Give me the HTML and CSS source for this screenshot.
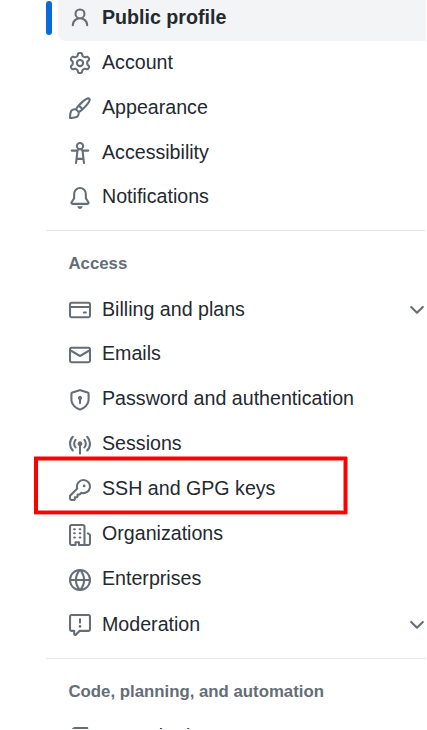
FILE: index.html
```html
<!DOCTYPE html>
<html lang="en">
<head>
<meta charset="utf-8">
<title>Settings</title>
<link rel="stylesheet" href="styles.css">
</head>
<body>
<nav class="sidebar">
  <ul class="group">
    <li class="item active"><svg class="icon" viewBox="0 0 16 16"><path d="M10.561 8.073a6.005 6.005 0 0 1 3.432 5.142.75.75 0 1 1-1.498.07 4.5 4.5 0 0 0-8.99 0 .75.75 0 0 1-1.498-.07 6.004 6.004 0 0 1 3.431-5.142 3.999 3.999 0 1 1 5.123 0ZM10.5 5a2.5 2.5 0 1 0-5 0 2.5 2.5 0 0 0 5 0Z"/></svg><span class="label">Public profile</span></li>
    <li class="item"><svg class="icon" viewBox="0 0 16 16"><path d="M8 0a8.2 8.2 0 0 1 .701.031C9.444.095 9.99.645 10.16 1.29l.288 1.107c.018.066.079.158.212.224.231.114.454.243.668.386.123.082.233.09.299.071l1.103-.303c.644-.176 1.392.021 1.82.63.27.385.506.792.704 1.218.315.675.111 1.422-.364 1.891l-.814.806c-.049.048-.098.147-.088.294.016.257.016.515 0 .772-.01.147.038.246.088.294l.814.806c.475.469.679 1.216.364 1.891a7.977 7.977 0 0 1-.704 1.217c-.428.61-1.176.807-1.82.63l-1.102-.302c-.067-.019-.177-.011-.3.071a5.909 5.909 0 0 1-.668.386c-.133.066-.194.158-.211.224l-.29 1.106c-.168.646-.715 1.196-1.458 1.26a8.006 8.006 0 0 1-1.402 0c-.743-.064-1.289-.614-1.458-1.26l-.289-1.106c-.018-.066-.079-.158-.212-.224a5.738 5.738 0 0 1-.668-.386c-.123-.082-.233-.09-.299-.071l-1.103.303c-.644.176-1.392-.021-1.82-.63a8.12 8.12 0 0 1-.704-1.218c-.315-.675-.111-1.422.363-1.891l.815-.806c.05-.048.098-.147.088-.294a6.214 6.214 0 0 1 0-.772c.01-.147-.038-.246-.088-.294l-.815-.806C.635 6.045.431 5.298.746 4.623a7.92 7.92 0 0 1 .704-1.217c.428-.61 1.176-.807 1.82-.63l1.102.302c.067.019.177.011.3-.071.214-.143.437-.272.668-.386.133-.066.194-.158.211-.224l.29-1.106C6.009.645 6.556.095 7.299.03 7.53.01 7.764 0 8 0Zm-.571 1.525c-.036.003-.108.036-.137.146l-.289 1.105c-.147.561-.549.967-.998 1.189-.173.086-.34.183-.5.29-.417.278-.97.423-1.529.27l-1.103-.303c-.109-.03-.175.016-.195.045-.22.312-.412.644-.573.99-.014.031-.021.11.059.19l.815.806c.411.406.562.957.53 1.456a4.709 4.709 0 0 0 0 .582c.032.499-.119 1.05-.53 1.456l-.815.806c-.081.08-.073.159-.059.19.162.346.353.677.573.989.02.03.085.076.195.046l1.102-.303c.56-.153 1.113-.008 1.53.27.161.107.328.204.501.29.447.222.85.629.997 1.189l.289 1.105c.029.109.101.143.137.146a6.6 6.6 0 0 0 1.142 0c.036-.003.108-.036.137-.146l.289-1.105c.147-.561.549-.967.998-1.189.173-.086.34-.183.5-.29.417-.278.97-.423 1.529-.27l1.103.303c.109.029.175-.016.195-.045.22-.313.411-.644.573-.99.014-.031.021-.11-.059-.19l-.815-.806c-.411-.406-.562-.957-.53-1.456a4.709 4.709 0 0 0 0-.582c-.032-.499.119-1.05.53-1.456l.815-.806c.081-.08.073-.159.059-.19a6.464 6.464 0 0 0-.573-.989c-.02-.03-.085-.076-.195-.046l-1.102.303c-.56.153-1.113.008-1.53-.27a4.44 4.44 0 0 0-.501-.29c-.447-.222-.85-.629-.997-1.189l-.289-1.105c-.029-.11-.101-.143-.137-.146a6.6 6.6 0 0 0-1.142 0ZM11 8a3 3 0 1 1-6 0 3 3 0 0 1 6 0ZM9.5 8a1.5 1.5 0 1 0-3.001.001A1.5 1.5 0 0 0 9.5 8Z"/></svg><span class="label">Account</span></li>
    <li class="item"><svg class="icon" viewBox="0 0 16 16"><path d="M11.134 1.535c.7-.509 1.416-.942 2.076-1.155.649-.21 1.463-.267 2.069.34.603.601.568 1.411.368 2.07-.202.668-.624 1.39-1.125 2.096-1.011 1.424-2.496 2.987-3.775 4.249-1.098 1.084-2.132 1.839-3.04 2.3a3.744 3.744 0 0 1-1.055 3.217c-.431.431-1.065.691-1.657.861-.614.177-1.294.287-1.914.357A21.151 21.151 0 0 1 .797 16H.743l.007-.75H.749L.742 16a.75.75 0 0 1-.743-.742l.743-.008-.742.007v-.054a21.25 21.25 0 0 1 .13-2.284c.067-.647.187-1.287.358-1.914.17-.591.43-1.226.86-1.657a3.746 3.746 0 0 1 3.227-1.054c.466-.893 1.225-1.907 2.314-2.982 1.271-1.255 2.833-2.75 4.245-3.777ZM1.62 13.089c-.051.464-.086.929-.104 1.395.466-.018.932-.053 1.396-.104a10.511 10.511 0 0 0 1.668-.309c.526-.151.856-.325 1.011-.48a2.25 2.25 0 1 0-3.182-3.182c-.155.155-.329.485-.48 1.01a10.515 10.515 0 0 0-.309 1.67Zm10.396-10.34c-1.224.89-2.605 2.189-3.822 3.384l1.718 1.718c1.21-1.205 2.51-2.597 3.387-3.833.47-.662.78-1.227.912-1.662.134-.444.032-.551.009-.575h-.001V1.78c-.014-.014-.113-.113-.548.027-.432.14-.995.462-1.655.942Zm-4.832 7.266-.001.001a9.859 9.859 0 0 0 1.63-1.142L7.155 7.216a9.7 9.7 0 0 0-1.161 1.607c.482.302.889.71 1.19 1.192Z"/></svg><span class="label">Appearance</span></li>
    <li class="item"><svg class="icon" viewBox="0 0 16 16"><path d="M9.923 5.302c.063.063.122.129.178.198H14A.75.75 0 0 1 14 7h-3.3l.578 5.163.362 2.997a.75.75 0 0 1-1.49.18L9.868 13H6.132l-.282 2.34a.75.75 0 0 1-1.49-.18l.362-2.997L5.3 7H2a.75.75 0 0 1 0-1.5h3.9a2.54 2.54 0 0 1 .176-.198 3 3 0 1 1 3.847 0ZM9.2 7.073h-.001a1.206 1.206 0 0 0-2.398 0L6.305 11.5h3.39ZM9.5 3a1.5 1.5 0 1 0-3.001.001A1.5 1.5 0 0 0 9.5 3Z"/></svg><span class="label">Accessibility</span></li>
    <li class="item raised"><svg class="icon" viewBox="0 0 16 16"><path d="M8 16a2 2 0 0 0 1.985-1.75c.017-.137-.097-.25-.235-.25h-3.5c-.138 0-.252.113-.235.25A2 2 0 0 0 8 16ZM3 5a5 5 0 0 1 10 0v2.947c0 .05.015.098.042.139l1.703 2.555A1.519 1.519 0 0 1 13.482 13H2.518a1.516 1.516 0 0 1-1.263-2.36l1.703-2.554A.255.255 0 0 0 3 7.947Zm5-3.5A3.5 3.5 0 0 0 4.5 5v2.947c0 .346-.102.683-.294.97l-1.703 2.556a.017.017 0 0 0-.003.01l.001.006.004.006.006.004.007.001h10.964l.007-.001.006-.004.004-.006.001-.007a.017.017 0 0 0-.003-.01l-1.703-2.554a1.745 1.745 0 0 1-.294-.97V5A3.5 3.5 0 0 0 8 1.5Z"/></svg><span class="label">Notifications</span></li>
  </ul>
  <section class="section">
    <h2 class="heading">Access</h2>
    <ul class="group">
      <li class="item"><svg class="icon" viewBox="0 0 16 16"><path d="M10.75 9a.75.75 0 0 0 0 1.5h1.5a.75.75 0 0 0 0-1.5h-1.5Z"/><path d="M0 3.75C0 2.784.784 2 1.75 2h12.5c.966 0 1.75.784 1.75 1.75v8.5A1.75 1.75 0 0 1 14.25 14H1.75A1.75 1.75 0 0 1 0 12.25ZM14.5 6.5h-13v5.75c0 .138.112.25.25.25h12.5a.25.25 0 0 0 .25-.25Zm0-2.75a.25.25 0 0 0-.25-.25H1.75a.25.25 0 0 0-.25.25V5h13Z"/></svg><span class="label">Billing and plans</span><svg class="chevron" viewBox="0 0 16 16"><path d="M12.78 5.22a.749.749 0 0 1 0 1.06l-4.25 4.25a.749.749 0 0 1-1.06 0L3.22 6.28a.749.749 0 1 1 1.06-1.06L8 8.939l3.72-3.719a.749.749 0 0 1 1.06 0Z"/></svg></li>
      <li class="item raised"><svg class="icon" viewBox="0 0 16 16"><path d="M1.75 2h12.5c.966 0 1.75.784 1.75 1.75v8.5A1.75 1.75 0 0 1 14.25 14H1.75A1.75 1.75 0 0 1 0 12.25v-8.5C0 2.784.784 2 1.75 2ZM1.5 12.251c0 .138.112.25.25.25h12.5a.25.25 0 0 0 .25-.25V5.809L8.38 9.397a.75.75 0 0 1-.76 0L1.5 5.809v6.442Zm13-8.181v-.32a.25.25 0 0 0-.25-.25H1.75a.25.25 0 0 0-.25.25v.32L8 7.88Z"/></svg><span class="label">Emails</span></li>
      <li class="item raised"><svg class="icon" viewBox="0 0 16 16"><path d="m8.533.133 5.25 1.68A1.75 1.75 0 0 1 15 3.48V7c0 1.566-.32 3.182-1.303 4.682-.983 1.498-2.585 2.813-5.032 3.855a1.697 1.697 0 0 1-1.33 0c-2.447-1.042-4.049-2.357-5.032-3.855C1.32 10.182 1 8.566 1 7V3.48a1.75 1.75 0 0 1 1.217-1.667l5.25-1.68a1.748 1.748 0 0 1 1.066 0Zm-.61 1.429.001.001-5.25 1.68a.251.251 0 0 0-.174.237V7c0 1.36.275 2.666 1.057 3.859.784 1.194 2.121 2.342 4.366 3.298a.196.196 0 0 0 .154 0c2.245-.957 3.582-2.103 4.366-3.297C13.225 9.666 13.5 8.358 13.5 7V3.48a.25.25 0 0 0-.174-.238l-5.25-1.68a.25.25 0 0 0-.153 0ZM9.5 6.5c0 .536-.286 1.032-.75 1.3v2.45a.75.75 0 0 1-1.5 0V7.8A1.5 1.5 0 1 1 9.5 6.5Z"/></svg><span class="label">Password and authentication</span></li>
      <li class="item raised"><svg class="icon" viewBox="0 0 16 16"><path d="M8.75 8.582v5.668a.75.75 0 0 1-1.5 0V8.582a1.75 1.75 0 1 1 1.5 0Zm3.983-7.125a.75.75 0 0 1 1.06.026A7.976 7.976 0 0 1 16 7c0 2.139-.84 4.083-2.207 5.517a.75.75 0 1 1-1.086-1.034A6.474 6.474 0 0 0 14.5 7a6.474 6.474 0 0 0-1.793-4.483.75.75 0 0 1 .026-1.06Zm-9.466 0c.3.286.312.76.026 1.06A6.474 6.474 0 0 0 1.5 7a6.47 6.47 0 0 0 1.793 4.483.75.75 0 0 1-1.086 1.034A7.973 7.973 0 0 1 0 7c0-2.139.84-4.083 2.207-5.517a.75.75 0 0 1 1.06-.026Zm8.556 2.321A4.988 4.988 0 0 1 13 7a4.988 4.988 0 0 1-1.177 3.222.75.75 0 1 1-1.146-.967A3.487 3.487 0 0 0 11.5 7c0-.86-.309-1.645-.823-2.255a.75.75 0 0 1 1.146-.967Zm-6.492.958A3.48 3.48 0 0 0 4.5 7a3.48 3.48 0 0 0 .823 2.255.75.75 0 0 1-1.146.967A4.981 4.981 0 0 1 3 7a4.982 4.982 0 0 1 1.188-3.236.75.75 0 1 1 1.143.972Z"/></svg><span class="label">Sessions</span></li>
      <li class="item raised marked"><svg class="icon" viewBox="0 0 16 16"><path d="M10.5 0a5.499 5.499 0 1 1-1.288 10.848l-.932.932a.749.749 0 0 1-.53.22H7v.75a.749.749 0 0 1-.22.53l-.5.5a.749.749 0 0 1-.53.22H5v.75a.749.749 0 0 1-.22.53l-.5.5a.749.749 0 0 1-.53.22h-2A1.75 1.75 0 0 1 0 14.25v-2c0-.199.079-.389.22-.53l4.932-4.932A5.5 5.5 0 0 1 10.5 0Zm-4 5.5c-.001.431.069.86.205 1.269a.75.75 0 0 1-.181.768L1.5 12.56v1.69c0 .138.112.25.25.25h1.69l.06-.06v-1.19a.75.75 0 0 1 .75-.75h1.19l.06-.06v-1.19a.75.75 0 0 1 .75-.75h1.19l1.023-1.025a.75.75 0 0 1 .768-.18A4 4 0 1 0 6.5 5.5ZM11 6a1 1 0 1 1 0-2 1 1 0 0 1 0 2Z"/></svg><span class="label">SSH and GPG keys</span></li>
      <li class="item raised"><svg class="icon" viewBox="0 0 16 16"><path d="M1.75 16A1.75 1.75 0 0 1 0 14.25V1.75C0 .784.784 0 1.75 0h8.5C11.216 0 12 .784 12 1.75v12.5c0 .085-.006.168-.018.25h2.268a.25.25 0 0 0 .25-.25V8.285a.25.25 0 0 0-.111-.208l-1.055-.703a.749.749 0 1 1 .832-1.248l1.055.703c.487.325.779.871.779 1.456v5.965A1.75 1.75 0 0 1 14.25 16h-3.5a.766.766 0 0 1-.197-.026c-.099.017-.2.026-.303.026h-3a.75.75 0 0 1-.75-.75V14h-1v1.25a.75.75 0 0 1-.75.75Zm-.25-1.75c0 .138.112.25.25.25H4v-1.25a.75.75 0 0 1 .75-.75h2.5a.75.75 0 0 1 .75.75v1.25h2.25a.25.25 0 0 0 .25-.25V1.75a.25.25 0 0 0-.25-.25h-8.5a.25.25 0 0 0-.25.25ZM3.75 6h.5a.75.75 0 0 1 0 1.5h-.5a.75.75 0 0 1 0-1.5ZM3 3.75A.75.75 0 0 1 3.75 3h.5a.75.75 0 0 1 0 1.5h-.5A.75.75 0 0 1 3 3.75Zm4 3A.75.75 0 0 1 7.75 6h.5a.75.75 0 0 1 0 1.5h-.5A.75.75 0 0 1 7 6.75ZM7.75 3h.5a.75.75 0 0 1 0 1.5h-.5a.75.75 0 0 1 0-1.5ZM3 9.75A.75.75 0 0 1 3.75 9h.5a.75.75 0 0 1 0 1.5h-.5A.75.75 0 0 1 3 9.75ZM7.75 9h.5a.75.75 0 0 1 0 1.5h-.5a.75.75 0 0 1 0-1.5Z"/></svg><span class="label">Organizations</span></li>
      <li class="item raised"><svg class="icon" viewBox="0 0 16 16"><path d="M8 0a8 8 0 1 1 0 16A8 8 0 0 1 8 0ZM5.78 8.75a9.64 9.64 0 0 0 1.363 4.177c.255.426.542.832.857 1.215.245-.296.551-.705.857-1.215A9.64 9.64 0 0 0 10.22 8.75Zm4.44-1.5a9.64 9.64 0 0 0-1.363-4.177c-.307-.51-.612-.919-.857-1.215a9.927 9.927 0 0 0-.857 1.215A9.64 9.64 0 0 0 5.78 7.25Zm-5.944 1.5H1.543a6.507 6.507 0 0 0 4.666 5.5c-.123-.181-.24-.365-.352-.552-.715-1.192-1.437-2.874-1.581-4.948Zm-2.733-1.5h2.733c.144-2.074.866-3.756 1.58-4.948.12-.197.237-.381.353-.552a6.507 6.507 0 0 0-4.666 5.5Zm10.181 1.5c-.144 2.074-.866 3.756-1.58 4.948-.12.197-.237.381-.353.552a6.507 6.507 0 0 0 4.666-5.5Zm2.733-1.5a6.507 6.507 0 0 0-4.666-5.5c.123.181.24.365.353.552.714 1.192 1.436 2.874 1.58 4.948Z"/></svg><span class="label">Enterprises</span></li>
      <li class="item"><svg class="icon" viewBox="0 0 16 16"><path d="M0 1.75C0 .784.784 0 1.75 0h12.5C15.216 0 16 .784 16 1.75v9.5A1.75 1.75 0 0 1 14.25 13H8.06l-2.573 2.573A1.458 1.458 0 0 1 3 14.543V13H1.75A1.75 1.75 0 0 1 0 11.25Zm1.75-.25a.25.25 0 0 0-.25.25v9.5c0 .138.112.25.25.25h2a.75.75 0 0 1 .75.75v2.19l2.72-2.72a.749.749 0 0 1 .53-.22h6.5a.25.25 0 0 0 .25-.25v-9.5a.25.25 0 0 0-.25-.25Zm7 2.25v2.5a.75.75 0 0 1-1.5 0v-2.5a.75.75 0 0 1 1.5 0ZM9 9a1 1 0 1 1-2 0 1 1 0 0 1 2 0Z"/></svg><span class="label">Moderation</span><svg class="chevron" viewBox="0 0 16 16"><path d="M12.78 5.22a.749.749 0 0 1 0 1.06l-4.25 4.25a.749.749 0 0 1-1.06 0L3.22 6.28a.749.749 0 1 1 1.06-1.06L8 8.939l3.72-3.719a.749.749 0 0 1 1.06 0Z"/></svg></li>
    </ul>
  </section>
  <section class="section">
    <h2 class="heading">Code, planning, and automation</h2>
    <ul class="group">
      <li class="item"><svg class="icon" viewBox="0 0 16 16"><path d="M2 2.5A2.5 2.5 0 0 1 4.5 0h8.75a.75.75 0 0 1 .75.75v12.5a.75.75 0 0 1-.75.75h-2.5a.75.75 0 0 1 0-1.5h1.75v-2h-8a1 1 0 0 0-.714 1.7.75.75 0 1 1-1.072 1.05A2.495 2.495 0 0 1 2 11.5Zm10.5-1h-8a1 1 0 0 0-1 1v6.708A2.486 2.486 0 0 1 4.5 9h8ZM5 12.25a.25.25 0 0 1 .25-.25h3.5a.25.25 0 0 1 .25.25v3.25a.25.25 0 0 1-.4.2l-1.45-1.087a.249.249 0 0 0-.3 0L5.4 15.7a.25.25 0 0 1-.4-.2Z"/></svg><span class="label">Repositories</span></li>
    </ul>
  </section>
</nav>
</body>
</html>
```
FILE: styles.css
```css
*,
*::before,
*::after {
  box-sizing: border-box;
}

html,
body {
  height: 730px;
  margin: 0;
  overflow: hidden;
  background: #fff;
}

.sidebar {
  display: flow-root;
  width: 380px;
  height: 729px;
  margin-left: 46px;
  clip-path: inset(0 0 0 -20px);
  font-family: "Liberation Sans", Arial, sans-serif;
  color: #24292f;
}

.group {
  list-style: none;
  margin: 0;
  padding: 0;
}

.sidebar > .group {
  margin-top: -5px;
  height: 235px;
}

.item {
  position: relative;
  display: flex;
  align-items: center;
  gap: 11px;
  height: 45px;
  margin-left: 12px;
  padding-left: 11px;
  font-size: 19.64px;
  line-height: 28px;
  white-space: nowrap;
}

.label {
  padding-bottom: 2px;
}

.raised .label {
  padding-bottom: 4px;
}

.item.active {
  height: 46px;
  margin-bottom: -1px;
  border-radius: 8px 0 0 8px;
  background: #f3f4f6;
  font-weight: 700;
}

.item.active::before {
  content: "";
  position: absolute;
  left: -12px;
  top: 6px;
  width: 6px;
  height: 34px;
  border-radius: 3px;
  background: #0969da;
}

.item.marked::after {
  content: "";
  position: absolute;
  left: -24px;
  top: -10px;
  width: 313px;
  height: 57px;
  border: 3px solid #f00;
  border-left-width: 4px;
  box-shadow:
    1px 0 #ff8080,
    0 1px #ff9c9c,
    0 -1px #ff8080,
    inset 0 1px #ff8080,
    inset -1px -1px #ff8080;
}

.icon,
.chevron {
  flex: none;
  width: 22px;
  height: 22px;
  fill: #656d76;
}

.chevron {
  margin-left: auto;
  margin-right: -2px;
}

.section {
  border-top: 1px solid #e6e8eb;
}

.section + .section {
  margin-top: 11px;
}

.heading {
  margin: 0;
  padding: 20px 0 11px 22.5px;
  font-size: 16.8px;
  line-height: 25px;
  font-weight: 700;
  color: #656d76;
}

.section + .section .heading {
  padding-bottom: 10px;
}

.section + .section .icon {
  margin-top: 2px;
}
```
